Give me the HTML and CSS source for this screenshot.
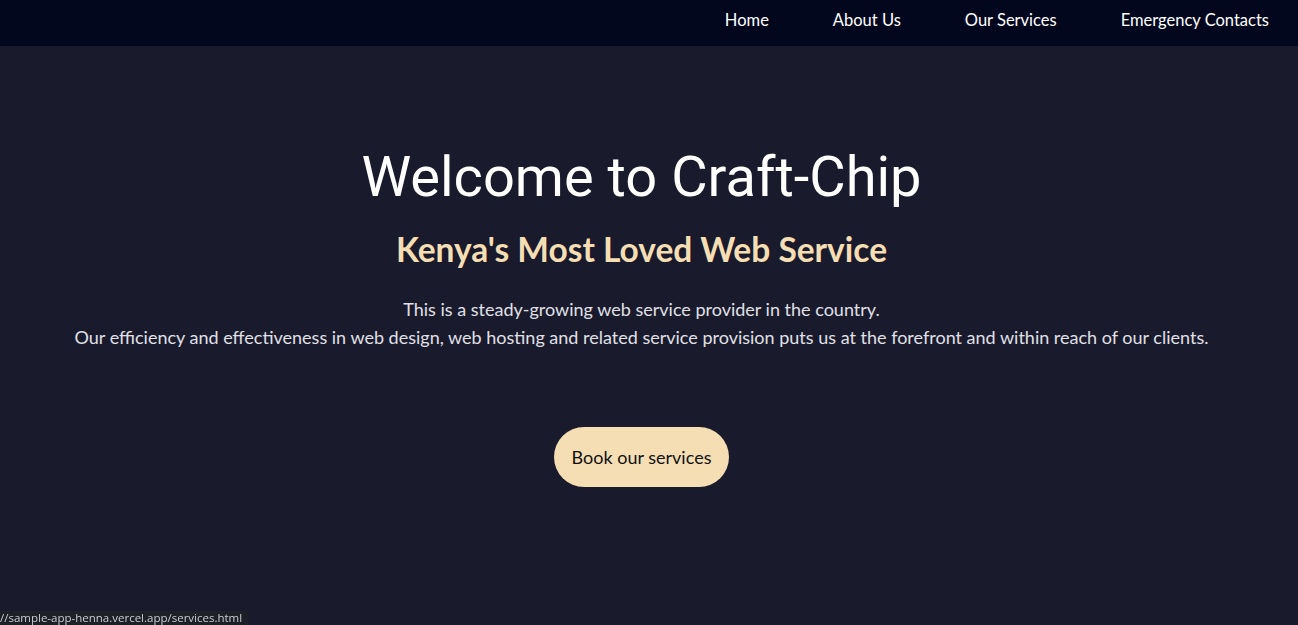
FILE: index.html
```html
<!DOCTYPE html>
<html lang="en">
<head>
<meta charset="utf-8">
<title>Craft-Chip</title>
<link rel="stylesheet" href="styles.css">
</head>
<body>
<header class="navbar">
  <nav class="nav-links">
    <a href="#" class="nav-link">Home</a>
    <a href="#" class="nav-link">About Us</a>
    <a href="#" class="nav-link">Our Services</a>
    <a href="#" class="nav-link">Emergency Contacts</a>
  </nav>
</header>
<main class="hero">
  <h1 class="hero-title">Welcome to Craft-Chip</h1>
  <h2 class="hero-subtitle">Kenya's Most Loved Web Service</h2>
  <p class="hero-text">This is a steady-growing web service provider in the country.<br>Our efficiency and effectiveness in web design, web hosting and related service provision puts us at the forefront and within reach of our clients.</p>
  <a href="#" class="hero-button">Book our services</a>
</main>
<div class="status-bubble">//sample-app-henna.vercel.app/services.html</div>
</body>
</html>
```
FILE: styles.css
```css
html, body {
  margin: 0;
  padding: 0;
  height: 100%;
}
body {
  background: #1a1a2d;
  font-family: "Lato", "Nunito", "Open Sans", sans-serif;
  color: #e2e2e6;
  overflow: hidden;
}
.navbar {
  background: #03071e;
  height: 46px;
  box-sizing: border-box;
  display: flex;
  justify-content: flex-end;
  align-items: center;
  padding: 0 29px 7px 0;
}
.nav-links {
  display: flex;
  gap: 64px;
}
.nav-link {
  color: #ffffff;
  text-decoration: none;
  font-size: 16.5px;
}
.hero {
  display: flex;
  flex-direction: column;
  align-items: center;
  text-align: center;
  padding: 98px 15px 0 0;
}
.hero-title {
  font-family: "Roboto", sans-serif;
  font-weight: 400;
  font-size: 56px;
  line-height: 66px;
  margin: 0;
  color: #ffffff;
}
.hero-subtitle {
  font-weight: 700;
  font-size: 33.5px;
  line-height: 40px;
  margin: 19px 0 0;
  color: #f5deb3;
}
.hero-text {
  font-size: 18px;
  line-height: 28px;
  margin: 26px 0 0;
  color: #e0e0e6;
}
.hero-button {
  margin-top: 76px;
  background: #f5deb3;
  color: #111111;
  text-decoration: none;
  font-size: 18px;
  height: 60px;
  padding: 0 18px;
  display: flex;
  align-items: center;
  border-radius: 30px;
}
.status-bubble {
  position: fixed;
  left: 0;
  bottom: 0;
  background: #1d2127;
  color: #c8ccd2;
  font-family: "Open Sans", sans-serif;
  font-size: 11.5px;
  line-height: 14px;
  padding: 0 6px 0 0;
  border-top-right-radius: 4px;
  white-space: nowrap;
}
```
